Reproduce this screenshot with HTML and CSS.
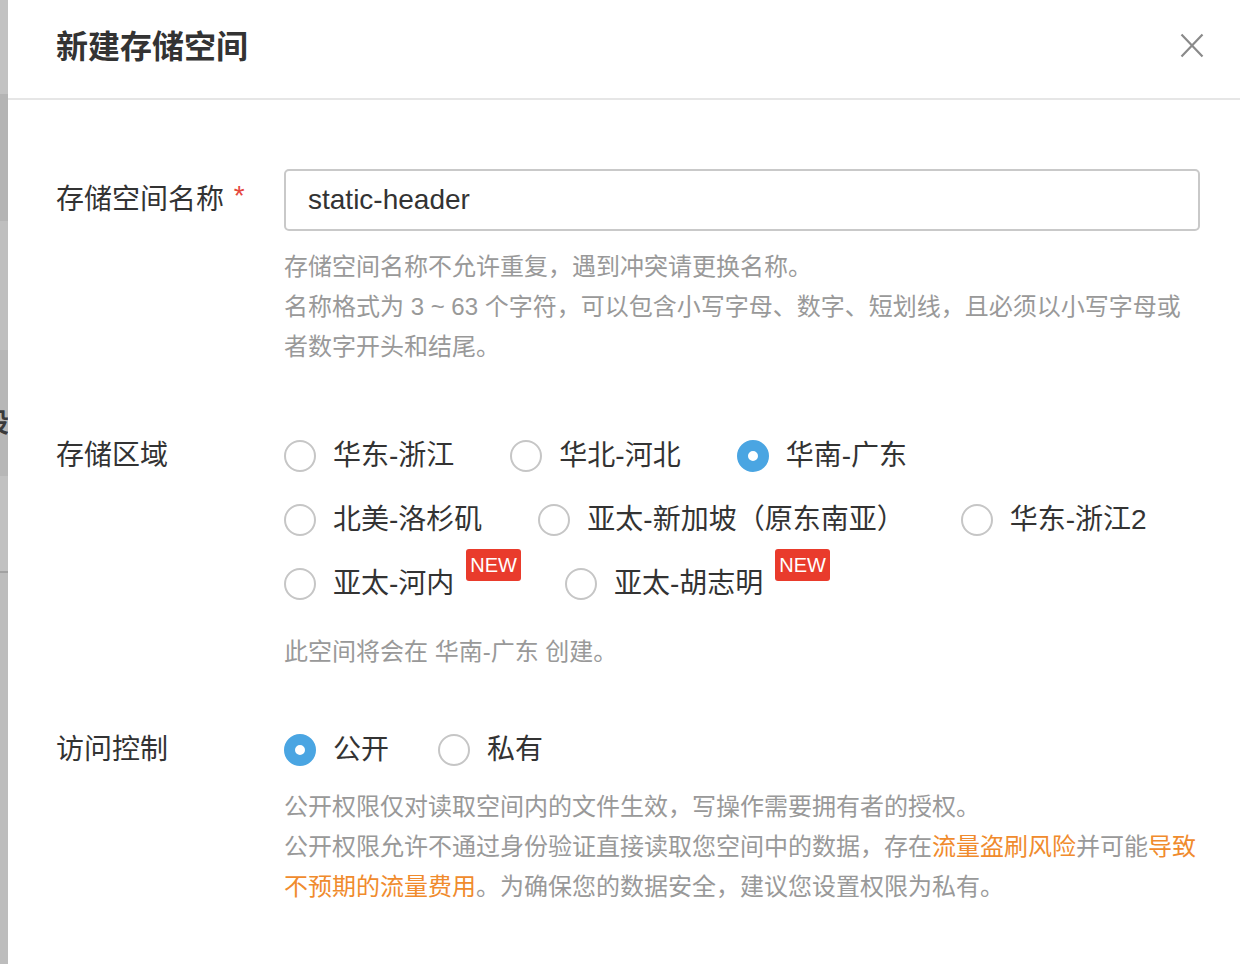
FILE: index.html
```html
<!DOCTYPE html>
<html lang="zh-CN">
<head>
<meta charset="utf-8">
<title>新建存储空间</title>
<link rel="stylesheet" href="styles.css">
</head>
<body>
<div class="backdrop"><span class="peek">设</span></div>
<div class="dialog">
  <header class="dialog-header">
    <h1 class="title">新建存储空间</h1>
    <button class="close" type="button" aria-label="关闭">
      <svg width="24" height="25" viewBox="0 0 24 25"><path d="M1.5 1.5 L22.5 23.5 M22.5 1.5 L1.5 23.5" stroke="#8a8a8a" stroke-width="2.2" fill="none"/></svg>
    </button>
  </header>
  <form class="form">
    <div class="row">
      <div class="label label-input">存储空间名称 <span class="req">*</span></div>
      <div class="field">
        <input class="input" type="text" value="static-header">
        <p class="hint hint-name">存储空间名称不允许重复，遇到冲突请更换名称。<br>名称格式为 3 ~ 63 个字符，可以包含小写字母、数字、短划线，且必须以小写字母或者数字开头和结尾。</p>
      </div>
    </div>

    <div class="row row-region">
      <div class="label">存储区域</div>
      <div class="field">
        <div class="radio-row radio-row-wide">
          <label class="radio"><span class="dot"></span><span class="radio-text">华东-浙江</span></label>
          <label class="radio"><span class="dot"></span><span class="radio-text">华北-河北</span></label>
          <label class="radio"><span class="dot checked"></span><span class="radio-text">华南-广东</span></label>
        </div>
        <div class="radio-row radio-row-wide">
          <label class="radio"><span class="dot"></span><span class="radio-text">北美-洛杉矶</span></label>
          <label class="radio"><span class="dot"></span><span class="radio-text">亚太-新加坡（原东南亚）</span></label>
          <label class="radio"><span class="dot"></span><span class="radio-text">华东-浙江2</span></label>
        </div>
        <div class="radio-row radio-row-wide">
          <label class="radio"><span class="dot"></span><span class="radio-text">亚太-河内</span><span class="badge">NEW</span></label>
          <label class="radio"><span class="dot"></span><span class="radio-text">亚太-胡志明</span><span class="badge">NEW</span></label>
        </div>
        <p class="hint hint-note">此空间将会在 华南-广东 创建。</p>
      </div>
    </div>

    <div class="row row-access">
      <div class="label">访问控制</div>
      <div class="field">
        <div class="radio-row">
          <label class="radio"><span class="dot checked"></span><span class="radio-text">公开</span></label>
          <label class="radio"><span class="dot"></span><span class="radio-text">私有</span></label>
        </div>
        <p class="hint hint-access">公开权限仅对读取空间内的文件生效，写操作需要拥有者的授权。<br>公开权限允许不通过身份验证直接读取您空间中的数据，存在<span class="warn">流量盗刷风险</span>并可能<span class="warn">导致不预期的流量费用</span>。为确保您的数据安全，建议您设置权限为私有。</p>
      </div>
    </div>
  </form>
</div>
</body>
</html>
```

FILE: styles.css
```css
* { box-sizing: border-box; }

html, body {
  margin: 0;
  padding: 0;
  height: 100%;
}

body {
  display: flex;
  min-height: 964px;
  background: #ffffff;
  font-family: "Liberation Sans", "Noto Sans CJK SC", sans-serif;
  color: #333333;
}

.backdrop {
  position: relative;
  width: 8px;
  flex: none;
  overflow: hidden;
  background: linear-gradient(to bottom,
    #c2c2c2 0, #c2c2c2 94px,
    #b4b4b4 94px, #b4b4b4 221px,
    #bfbfbf 221px, #bfbfbf 350px,
    #b7b7b7 350px, #b7b7b7 476px,
    #c1c1c1 476px, #c1c1c1 571px,
    #a2a2a2 571px, #a2a2a2 573px,
    #bdbdbd 573px, #bdbdbd 100%);
}

.peek {
  position: absolute;
  top: 406px;
  right: -1px;
  font-family: "Noto Sans CJK SC", sans-serif;
  font-size: 26px;
  line-height: 30px;
  font-weight: 700;
  color: #3a3a3a;
}

.dialog {
  flex: 1;
  background: #ffffff;
}

.dialog-header {
  height: 100px;
  display: flex;
  align-items: center;
  justify-content: space-between;
  padding: 0 36px 10px 48px;
  border-bottom: 2px solid #e6e6e6;
}

.title {
  margin: 0;
  font-family: "Noto Sans CJK SC", sans-serif;
  font-size: 32px;
  font-weight: 700;
  color: #333333;
  line-height: 40px;
}

.close {
  border: 0;
  background: none;
  padding: 0;
  width: 24px;
  height: 25px;
  margin-top: 2px;
  display: flex;
  cursor: pointer;
}

.form {
  padding: 69px 40px 0 48px;
}

.row {
  display: flex;
}

.row-region { margin-top: 57px; }
.row-access { margin-top: 46px; }

.label {
  width: 228px;
  flex: none;
  font-size: 28px;
  line-height: 64px;
  color: #333333;
}

.label-input { line-height: 62px; }

.req {
  color: #e5473d;
  font-size: 28px;
  vertical-align: top;
  position: relative;
  top: -4px;
  margin-left: 2px;
}

.field {
  flex: 1;
  min-width: 0;
}

.input {
  display: block;
  width: 100%;
  height: 62px;
  border: 2px solid #c9c9c9;
  border-radius: 5px;
  padding: 0 22px;
  font-family: "Liberation Sans", "Noto Sans CJK SC", sans-serif;
  font-size: 28px;
  color: #333333;
  outline: none;
  background: #ffffff;
}

.hint {
  margin: 0;
  font-size: 24px;
  line-height: 40px;
  color: #999999;
}

.hint-name { margin-top: 16px; }
.hint-note { margin-top: 16px; }
.hint-access { margin-top: 5px; }

.warn { color: #f08b2d; }

.radio-row {
  display: flex;
  column-gap: 49px;
}

.radio-row-wide {
  column-gap: 56px;
}

.radio {
  display: flex;
  align-items: center;
  height: 64px;
  cursor: pointer;
}

.dot {
  width: 32px;
  height: 32px;
  border-radius: 50%;
  border: 2px solid #c6c6c6;
  background: #ffffff;
  margin-right: 17px;
  flex: none;
}

.dot.checked {
  border: 11px solid #4aa5e2;
  background: #ffffff;
}

.radio-text {
  font-size: 28px;
  line-height: 40px;
  color: #333333;
  white-space: nowrap;
}

.badge {
  align-self: flex-start;
  margin-top: -3px;
  margin-left: 12px;
  margin-right: -12px;
  height: 32px;
  padding: 0 4px;
  border-radius: 3px;
  background: #e93b2c;
  color: #ffffff;
  font-family: "Liberation Sans", sans-serif;
  font-size: 20px;
  line-height: 32px;
}
```
